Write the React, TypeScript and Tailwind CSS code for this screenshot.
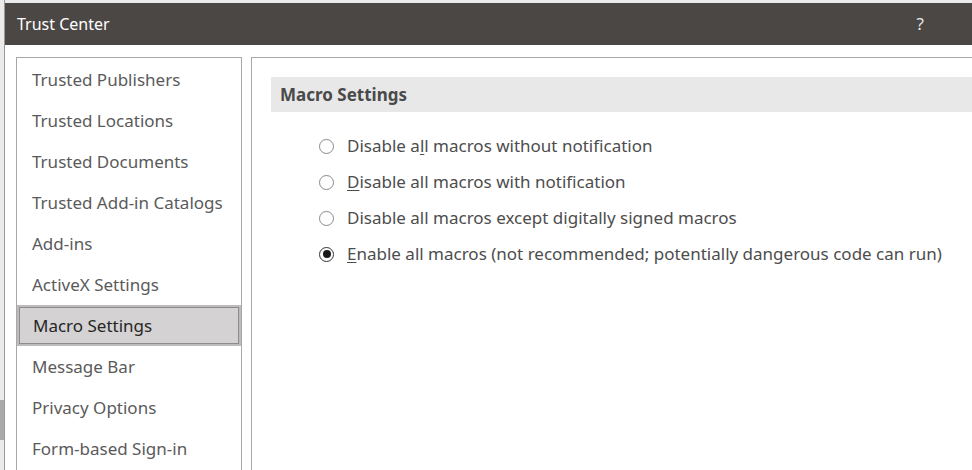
import React from 'react';

const navItems = [
  'Trusted Publishers',
  'Trusted Locations',
  'Trusted Documents',
  'Trusted Add-in Catalogs',
  'Add-ins',
  'ActiveX Settings',
  'Macro Settings',
  'Message Bar',
  'Privacy Options',
  'Form-based Sign-in',
];

const options: { before: string; key: string; after: string; checked?: boolean }[] = [
  { before: 'Disable a', key: 'l', after: 'l macros without notification' },
  { before: '', key: 'D', after: 'isable all macros with notification' },
  { before: 'Disable all macros except di', key: 'g', after: 'itally signed macros' },
  { before: '', key: 'E', after: 'nable all macros (not recommended; potentially dangerous code can run)', checked: true },
];

const Radio: React.FC<{ checked?: boolean }> = ({ checked }) => (
  <span
    className={`flex items-center justify-center w-[15px] h-[15px] rounded-full border-[1.5px] bg-white ${
      checked ? 'border-[#333]' : 'border-[#8a8a8a]'
    }`}
  >
    {checked && <span className="w-[8px] h-[8px] rounded-full bg-[#1a1a1a]" />}
  </span>
);

export default function App() {
  return (
    <div
      className="w-[972px] h-[470px] overflow-hidden flex bg-[#ebebeb]"
      style={{ fontFamily: '"Noto Sans", "Open Sans", sans-serif' }}
    >
      {/* strip of the window behind */}
      <div className="w-[5px] flex flex-col border-r border-[#9a9a9a]">
        <div className="h-[400px]" />
        <div className="h-[40px] bg-[#a9a9a9]" />
      </div>

      <div className="flex-1 flex flex-col pt-[3px]">
        <div className="h-[42px] bg-[#4b4745] flex items-center justify-between pl-[12px] pr-[48px] text-[16px] text-white">
          <span>Trust Center</span>
          <span className="text-[17px] text-[#e6e6e6]">?</span>
        </div>

        <div className="flex-1 bg-white flex pt-[12px] pl-[11px] gap-[9px]">
          <div className="w-[226px] shrink-0 border border-b-0 border-[#a8a8a8] pt-[1px]">
            {navItems.map((item) =>
              item === 'Macro Settings' ? (
                <div key={item} className="h-[41px] bg-[#bdbbbb] p-[2px]">
                  <div className="h-full border border-[#8c8c8c] bg-[#d4d2d2] flex items-center pl-[13px] text-[17px] text-[#262626]">
                    {item}
                  </div>
                </div>
              ) : (
                <div key={item} className="h-[41px] flex items-center pl-[15px] text-[17px] text-[#5a5a5a]">
                  {item}
                </div>
              )
            )}
          </div>

          <div className="flex-1 border-l border-t border-[#a8a8a8] pt-[19px] pl-[19px]">
            <div className="h-[35px] bg-[#e8e8e8] flex items-center pl-[9px] text-[17px] font-bold text-[#4a4a4a]">
              Macro Settings
            </div>
            <div className="pt-[16px] pl-[48px] flex flex-col">
              {options.map((o, i) => (
                <div key={i} className="h-[36px] flex items-center gap-[13px] text-[17px] text-[#4d4d4d]">
                  <Radio checked={o.checked} />
                  <span>
                    {o.before}
                    <span className="underline underline-offset-2">{o.key}</span>
                    {o.after}
                  </span>
                </div>
              ))}
            </div>
          </div>
        </div>
      </div>
    </div>
  );
}
